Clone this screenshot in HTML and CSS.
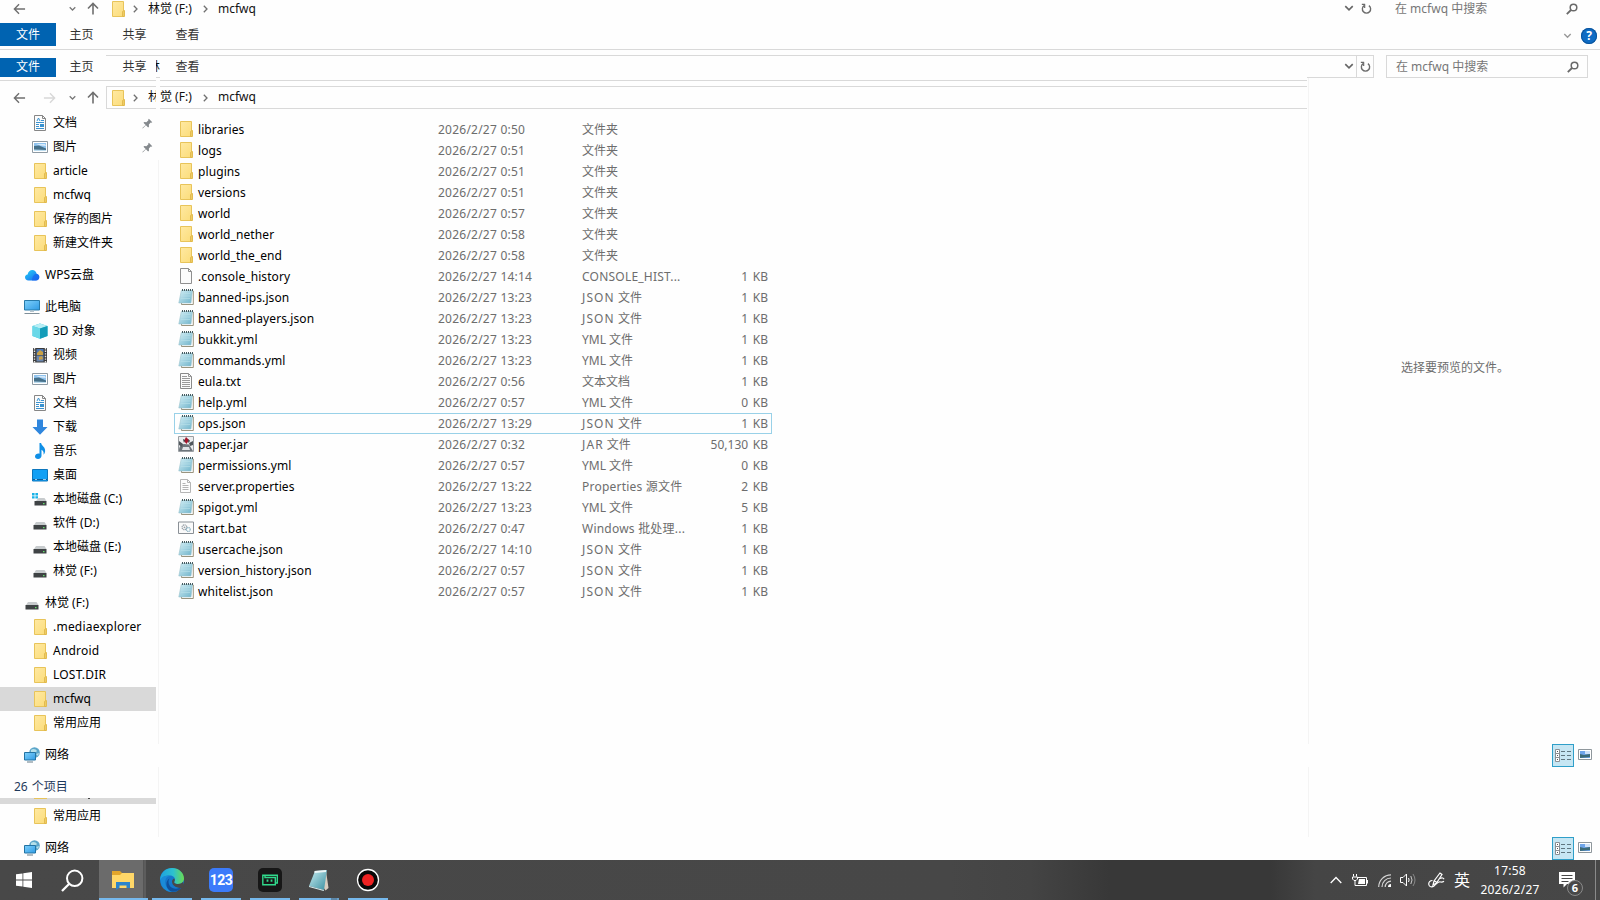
FILE: index.html
```html
<!DOCTYPE html>
<html lang="zh-CN">
<head>
    <meta charset="UTF-8">
    <meta name="viewport" content="width=device-width, initial-scale=1.0">
    <title>mcfwq</title>
    <link rel="stylesheet" href="styles.css">
</head>
<body>
    <!-- 图标 -->
    <svg width="0" height="0" class="sprite">
        <defs>
            <linearGradient id="gFolder" x1="0" y1="0" x2="1" y2="1"><stop offset="0" stop-color="#ffe9a2"/><stop offset="1" stop-color="#fbdc79"/></linearGradient>
            <linearGradient id="gPad" x1="0" y1="0" x2="1" y2="1"><stop offset="0" stop-color="#d3eef5"/><stop offset="1" stop-color="#6fb4cb"/></linearGradient>
            <linearGradient id="gCloud" x1="0" y1="0" x2="1" y2="1"><stop offset="0" stop-color="#26d3f5"/><stop offset="1" stop-color="#1762f0"/></linearGradient>
            <linearGradient id="gScreen" x1="0" y1="0" x2="1" y2="1"><stop offset="0" stop-color="#7fd0fb"/><stop offset="1" stop-color="#2f9be4"/></linearGradient>
            <linearGradient id="gEdge" x1="0" y1="0" x2="1" y2="0"><stop offset="0" stop-color="#1ea2e0"/><stop offset=".55" stop-color="#2dc1cf"/><stop offset="1" stop-color="#6bdc50"/></linearGradient>
            <linearGradient id="gNote" x1="0" y1="0" x2="1" y2="1"><stop offset="0" stop-color="#c9eef2"/><stop offset="1" stop-color="#3a8fa0"/></linearGradient>
        </defs>
        <symbol id="folder" viewBox="0 0 16 16"><path d="M2.500.5h11v9h1v6h-12z" fill="url(#gFolder)" stroke="#e8c45a"/><path d="M12.500 15.500v-5l1.500-1v6z" fill="#fbdc79" stroke="#dcb345" stroke-width=".8"/></symbol>
        <symbol id="note" viewBox="0 0 16 16"><path d="M4 2h11.300v13.500H3.500z" fill="#fff" stroke="#8f8870" stroke-width=".9"/><path d="M3.300 1.500h11.200L13 14H.8z" fill="url(#gPad)" stroke="#9cc4cf" stroke-width=".6"/><path d="M3.500 4.500h9M3 7h9.500M2.600 9.500h9.500" stroke="#b9e1ea" stroke-width=".6"/><path d="M4 1h11" stroke="#455b61" stroke-width="1.800" stroke-dasharray="1 1"/></symbol>
        <symbol id="blank" viewBox="0 0 16 16"><path d="M2.500.5h8l3 3v12h-11z" fill="#fbfbfb" stroke="#8f8f8f"/><path d="M10.500.5v3h3" fill="none" stroke="#8f8f8f"/></symbol>
        <symbol id="txt" viewBox="0 0 16 16"><path d="M2.500.5h8l3 3v12h-11z" fill="#fbfbfb" stroke="#8a8a8a"/><path d="M10.500.5v3h3M4 3.500h5M4 5.500h8M4 7.500h8M4 9.500h8M4 11.500h8M4 13.500h8" fill="none" stroke="#8f8f8f" stroke-width=".9"/></symbol>
        <symbol id="prop" viewBox="0 0 16 16"><path d="M2.500 1.500h7l3 3v10h-10z" fill="#fdfdfd" stroke="#b5b5b5"/><path d="M9.500 1.500v3h3M4.500 5.500h3M4.500 7.500h6M4.500 9.500h6M4.500 11.500h6" fill="none" stroke="#b5b5b5"/></symbol>
        <symbol id="jar" viewBox="0 0 16 16"><path d="M.5.5h15v15H.5z" fill="#eceeef" stroke="#9a9fa3"/><path d="M1 15c0-5 2-6.500 5-7l5 .5 4 6.500z" fill="#6d757b"/><path d="M1 5l4 3-1 3-3-2zM11 7l4-2v4l-3 1z" fill="#50575c"/><path d="M5 11h6l1 3H4z" fill="#dfe3e6"/><path d="M8 1l3 3-2.500 4L6 5z" fill="#a3152b"/><path d="M5 3l2 1-1 3zM10.500 3l1.500 2-2 2z" fill="#35393c"/></symbol>
        <symbol id="bat" viewBox="0 0 16 16"><path d="M.5 2h15v11.500H.5z" fill="#fafafa" stroke="#8a9096"/><circle cx="6.500" cy="7.300" r="2.400" fill="none" stroke="#9aa1a8" stroke-width="1.300" stroke-dasharray="1.200 .5"/><circle cx="6.500" cy="7.300" r=".9" fill="#9aa1a8"/><circle cx="10.300" cy="9.500" r="1.900" fill="#fff" stroke="#86aebf" stroke-width="1.200" stroke-dasharray="1 .4"/></symbol>
        <symbol id="doc" viewBox="0 0 16 16"><path d="M2.500.5h8l3 3v12h-11z" fill="#fcfcfc" stroke="#868686"/><path d="M10.500.5v3h3" fill="none" stroke="#868686"/><path d="M5 6l1.500-3L8 6M9 5.500h3M4 7.500h8M4 9.500h3M4 11.500h3M4 13.500h8" fill="none" stroke="#3a92cf"/><path d="M8 9h4v3H8z" fill="#3a92cf"/></symbol>
        <symbol id="pic" viewBox="0 0 16 16"><path d="M.5 2.500h15v11H.5z" fill="#fff" stroke="#8e9aa3"/><path d="M2 4h12v8H2z" fill="#8fc3ee"/><path d="M2 7l5-.5 7 3V12H2z" fill="#45708a"/><path d="M2 10.500l12 .5v1H2z" fill="#bcdcef"/><path d="M4 5h9l1 2-5-.5z" fill="#d7eafa"/></symbol>
        <symbol id="cloud" viewBox="0 0 16 16"><path d="M4.500 13.500C2.300 13.500 1 12 1 10.300c0-1.600 1-2.600 2.600-2.900C4.200 4.700 6 3 8.200 3c2.300 0 4 1.500 4.400 3.800 1.800.4 2.700 1.600 2.700 3.200 0 2-1.300 3.500-3.500 3.500z" fill="url(#gCloud)"/><path d="M8 13.500c0-4 2-6.500 4.600-6.700 1.800.4 2.700 1.600 2.700 3.200 0 2-1.300 3.500-3.500 3.500z" fill="#1767ee" opacity=".7"/></symbol>
        <symbol id="pc" viewBox="0 0 16 16"><path d="M.5 1.500h15v9.500H.5z" fill="url(#gScreen)" stroke="#287aa9"/><path d="M6 11.500h4v1.500H6z" fill="#b6c4cc"/><path d="M.5 14.500h15" stroke="#7f8f99" stroke-width="1"/></symbol>
        <symbol id="cube" viewBox="0 0 16 16"><path d="M8 .5l7.500 2.500v10L8 15.800.5 13V3z" fill="#39c4dc"/><path d="M8 .5L15.500 3 8 5.500.5 3z" fill="#b7eef5"/><path d="M.5 3L8 5.500v10.300L.5 13z" fill="#6ad8e8"/><path d="M8 5.500L15.500 3v10L8 15.800z" fill="#149cb8"/></symbol>
        <symbol id="video" viewBox="0 0 16 16"><path d="M1 1h14v14.500H1z" fill="#3c3c3c"/><path d="M2.500 1v14.500M13.500 1v14.500" stroke="#e8e8e8" stroke-width="1.400" stroke-dasharray="1.400 1.200"/><path d="M4.500 2h7v6h-7z" fill="#4b77b5"/><path d="M4.500 8.500h7v6h-7z" fill="#6b86ad"/><path d="M5 6l3-3 3 2v3H5zM7 10l3-1 1 3-4 1z" fill="#caa144"/></symbol>
        <symbol id="down" viewBox="0 0 16 16"><path d="M5 .5h6V8h4.500L8 15.800.5 8H5z" fill="#2f86dd"/></symbol>
        <symbol id="music" viewBox="0 0 16 16"><path d="M7.500 0h1.600c.3 3 4.700 4 4 8.500-.2 1.500-.8 2.500-1.600 3.200C12 9 11 7.500 9.500 6.800v6c0 1.800-1.500 3.200-3.500 3.200-1.800 0-3-1-3-2.500 0-1.800 1.700-3 3.500-3 .4 0 .7 0 1 .2z" fill="#0f8fe6"/></symbol>
        <symbol id="desk" viewBox="0 0 16 16"><path d="M.5 2.500h15v11.500H.5z" fill="#12a0f5" stroke="#0c76bd"/><path d="M1 12.500h14" stroke="#0a5f9c"/><path d="M3 12.500h2M11 12.500h3" stroke="#bfe6ff" stroke-width=".8"/></symbol>
        <symbol id="disk" viewBox="0 0 16 16"><path d="M4 7h8.500l2 3H2z" fill="#c7cbcd"/><path d="M1.500 10h13v4.500h-13z" fill="#3f4345"/><path d="M11 12h1.500v1.200H11z" fill="#62e06a"/></symbol>
        <symbol id="sysdisk" viewBox="0 0 16 16"><path d="M0 2h2.600v2.400H0zM3.400 2h2.600v2.400H3.400zM0 5.200h2.600v2.400H0zM3.400 5.200h2.600v2.400H3.400z" fill="#18b2e8"/><path d="M6.500 7h6l2 3H4z" fill="#c7cbcd"/><path d="M2.500 10h12v4.500h-12z" fill="#3f4345"/><path d="M11 12h1.500v1.200H11z" fill="#62e06a"/></symbol>
        <symbol id="net" viewBox="0 0 16 16"><circle cx="10.500" cy="5.500" r="5.300" fill="#5ba5c9"/><path d="M7 3c2-2 5-1 6 1l-2 2-4-1zM12 7l3-1-1 3z" fill="#b5dfe9"/><path d="M.5 5.500h11v7.500H.5z" fill="url(#gScreen)" stroke="#2373a3"/><path d="M3 15h6" stroke="#8899a3" stroke-width="1.300"/></symbol>
        <symbol id="pin" viewBox="0 0 12 12"><path d="M7.500.8l3.700 3.700-1 .6-.7-.1-2 2.200.1 2.300-.9.900L4.300 8 .8 11.500.4 11 4 7.600 1.600 5.200l1-.8 2.200.1 2.200-2-.2-.8z" fill="#84898d"/></symbol>
        <symbol id="left" viewBox="0 0 14 12"><path d="M13 6H1.500M6.500 1L1.500 6l5 5" fill="none" stroke="currentColor" stroke-width="1.500"/></symbol>
        <symbol id="up" viewBox="0 0 12 13"><path d="M6 12.500V1.500M1 6.500l5-5 5 5" fill="none" stroke="currentColor" stroke-width="1.600"/></symbol>
        <symbol id="caret" viewBox="0 0 8 6"><path d="M.8 1L4 4.200 7.200 1" fill="none" stroke="currentColor" stroke-width="1.400"/></symbol>
        <symbol id="chev" viewBox="0 0 5 8"><path d="M.8.8L4 4 .8 7.200" fill="none" stroke="currentColor" stroke-width="1.300"/></symbol>
        <symbol id="reload" viewBox="0 0 12 12"><path d="M3.400 2.300A4.500 4.500 0 1 0 8.600 2.300" fill="none" stroke="#6a6a6a" stroke-width="1.500"/><path d="M4.500 1H.9M4 .8v4" fill="none" stroke="#6a6a6a" stroke-width="1.300"/></symbol>
        <symbol id="find" viewBox="0 0 12 12"><circle cx="7.500" cy="4.500" r="3.300" fill="none" stroke="#6a6a6a" stroke-width="1.500"/><path d="M5 7L.8 11.200" stroke="#6a6a6a" stroke-width="1.800"/></symbol>
        <symbol id="details" viewBox="0 0 16 13"><path d="M.5.5h4v12h-4zM.5 4.500h4M.5 8.500h4" fill="#fff" stroke="#8b8f94"/><path d="M2 2.500h1M2 6.500h1M2 10.500h1" stroke="#555"/><path d="M6 2.500h4M12 2.500h4M6 6.500h4M12 6.500h4M6 10.500h4M12 10.500h4" stroke="#5f7680"/></symbol>
        <symbol id="thumb" viewBox="0 0 14 11"><path d="M.5.5h13v10H.5z" fill="#fff" stroke="#8f979c"/><path d="M2 2h10v7H2z" fill="#6fa5ea"/><path d="M7 2h5v3H7z" fill="#cfe2fa"/><path d="M2 5l4 1 6-1v3L2 9z" fill="#3d6b78"/></symbol>
    </svg>

    <div class="explorer">
        <div class="top">
            <div class="addr addr-top">
                <svg class="i-left"><use href="#left"/></svg>
                <svg class="i-left hidden"><use href="#left"/></svg>
                <svg class="i-caret"><use href="#caret"/></svg>
                <svg class="i-up"><use href="#up"/></svg>
                <div class="path">
                    <svg class="i16"><use href="#folder"/></svg>
                    <svg class="i-chev c1"><use href="#chev"/></svg>
                    <span class="drive">林觉 (F:)</span>
                    <svg class="i-chev c2"><use href="#chev"/></svg>
                    <span>mcfwq</span>
                </div>
                <div class="addr-end">
                    <svg class="i-drop"><use href="#caret"/></svg>
                    <svg class="i-reload"><use href="#reload"/></svg>
                    <div class="search"><span>在 mcfwq 中搜索</span><svg class="i-find"><use href="#find"/></svg></div>
                </div>
            </div>
            <div class="tabs">
                <span class="tab file">文件</span><span class="tab">主页</span><span class="tab">共享</span><span class="tab">查看</span>
                <div class="tabs-end">
                    <svg class="i-fold"><use href="#caret"/></svg>
                    <span class="help">?</span>
                </div>
            </div>
        </div>

        <div class="main">
            <div class="left">
                <div class="boxline"></div>
                <div class="tabs tabs2">
                    <span class="tab file">文件</span><span class="tab">主页</span><span class="tab">共享</span><span class="tab">查看</span>
                </div>
                <div class="addr addr2">
                    <svg class="i-left"><use href="#left"/></svg>
                    <svg class="i-left forward"><use href="#left"/></svg>
                    <svg class="i-caret"><use href="#caret"/></svg>
                    <svg class="i-up"><use href="#up"/></svg>
                    <div class="path">
                        <svg class="i16"><use href="#folder"/></svg>
                        <svg class="i-chev c1"><use href="#chev"/></svg>
                        <span class="drive">林觉 (F:)</span>
                        <svg class="i-chev c2"><use href="#chev"/></svg>
                        <span>mcfwq</span>
                    </div>
                </div>
                <!-- 分隔条上残留的一段地址栏 -->
                <div class="tear"><div class="tear-box"><span>林</span></div></div>

                <div class="body">
                    <div class="nav">
                        <div class="item sub"><svg class="i16"><use href="#doc"/></svg><span>文档</span><svg class="i-pin"><use href="#pin"/></svg></div>
                        <div class="item sub"><svg class="i16"><use href="#pic"/></svg><span>图片</span><svg class="i-pin"><use href="#pin"/></svg></div>
                        <div class="item sub"><svg class="i16"><use href="#folder"/></svg><span>article</span></div>
                        <div class="item sub"><svg class="i16"><use href="#folder"/></svg><span>mcfwq</span></div>
                        <div class="item sub"><svg class="i16"><use href="#folder"/></svg><span>保存的图片</span></div>
                        <div class="item sub"><svg class="i16"><use href="#folder"/></svg><span>新建文件夹</span></div>
                        <div class="item root"><svg class="i16"><use href="#cloud"/></svg><span>WPS云盘</span></div>
                        <div class="item root"><svg class="i16"><use href="#pc"/></svg><span>此电脑</span></div>
                        <div class="item sub"><svg class="i16"><use href="#cube"/></svg><span>3D 对象</span></div>
                        <div class="item sub"><svg class="i16"><use href="#video"/></svg><span>视频</span></div>
                        <div class="item sub"><svg class="i16"><use href="#pic"/></svg><span>图片</span></div>
                        <div class="item sub"><svg class="i16"><use href="#doc"/></svg><span>文档</span></div>
                        <div class="item sub"><svg class="i16"><use href="#down"/></svg><span>下载</span></div>
                        <div class="item sub"><svg class="i16"><use href="#music"/></svg><span>音乐</span></div>
                        <div class="item sub"><svg class="i16"><use href="#desk"/></svg><span>桌面</span></div>
                        <div class="item sub"><svg class="i16"><use href="#sysdisk"/></svg><span>本地磁盘 (C:)</span></div>
                        <div class="item sub"><svg class="i16"><use href="#disk"/></svg><span>软件 (D:)</span></div>
                        <div class="item sub"><svg class="i16"><use href="#disk"/></svg><span>本地磁盘 (E:)</span></div>
                        <div class="item sub"><svg class="i16"><use href="#disk"/></svg><span>林觉 (F:)</span></div>
                        <div class="item root"><svg class="i16"><use href="#disk"/></svg><span>林觉 (F:)</span></div>
                        <div class="item sub"><svg class="i16"><use href="#folder"/></svg><span class="wide">.mediaexplorer</span></div>
                        <div class="item sub"><svg class="i16"><use href="#folder"/></svg><span class="wide">Android</span></div>
                        <div class="item sub"><svg class="i16"><use href="#folder"/></svg><span class="wide">LOST.DIR</span></div>
                        <div class="item sub active"><svg class="i16"><use href="#folder"/></svg><span>mcfwq</span></div>
                        <div class="item sub"><svg class="i16"><use href="#folder"/></svg><span>常用应用</span></div>
                        <div class="item root"><svg class="i16"><use href="#net"/></svg><span>网络</span></div>
                        <div class="count">26 个项目</div>
                        <div class="sliver"><i class="sliver-folder"></i><i class="sliver-q"></i></div>
                        <div class="item sub"><svg class="i16"><use href="#folder"/></svg><span>常用应用</span></div>
                        <div class="item root"><svg class="i16"><use href="#net"/></svg><span>网络</span></div>
                    </div>
                    <div class="divider nav-divider"><i></i><i></i></div>

                    <div class="files">
                        <div class="row"><svg class="i16"><use href="#folder"/></svg><span class="name">libraries</span><span class="date">2026/2/27 0:50</span><span class="type">文件夹</span><span class="size"></span></div>
                        <div class="row"><svg class="i16"><use href="#folder"/></svg><span class="name">logs</span><span class="date">2026/2/27 0:51</span><span class="type">文件夹</span><span class="size"></span></div>
                        <div class="row"><svg class="i16"><use href="#folder"/></svg><span class="name">plugins</span><span class="date">2026/2/27 0:51</span><span class="type">文件夹</span><span class="size"></span></div>
                        <div class="row"><svg class="i16"><use href="#folder"/></svg><span class="name">versions</span><span class="date">2026/2/27 0:51</span><span class="type">文件夹</span><span class="size"></span></div>
                        <div class="row"><svg class="i16"><use href="#folder"/></svg><span class="name">world</span><span class="date">2026/2/27 0:57</span><span class="type">文件夹</span><span class="size"></span></div>
                        <div class="row"><svg class="i16"><use href="#folder"/></svg><span class="name">world_nether</span><span class="date">2026/2/27 0:58</span><span class="type">文件夹</span><span class="size"></span></div>
                        <div class="row"><svg class="i16"><use href="#folder"/></svg><span class="name">world_the_end</span><span class="date">2026/2/27 0:58</span><span class="type">文件夹</span><span class="size"></span></div>
                        <div class="row"><svg class="i16"><use href="#blank"/></svg><span class="name">.console_history</span><span class="date">2026/2/27 14:14</span><span class="type wide">CONSOLE_HIST...</span><span class="size">1 KB</span></div>
                        <div class="row"><svg class="i16"><use href="#note"/></svg><span class="name">banned-ips.json</span><span class="date">2026/2/27 13:23</span><span class="type"><b>JSON</b> 文件</span><span class="size">1 KB</span></div>
                        <div class="row"><svg class="i16"><use href="#note"/></svg><span class="name">banned-players.json</span><span class="date">2026/2/27 13:23</span><span class="type"><b>JSON</b> 文件</span><span class="size">1 KB</span></div>
                        <div class="row"><svg class="i16"><use href="#note"/></svg><span class="name">bukkit.yml</span><span class="date">2026/2/27 13:23</span><span class="type">YML 文件</span><span class="size">1 KB</span></div>
                        <div class="row"><svg class="i16"><use href="#note"/></svg><span class="name">commands.yml</span><span class="date">2026/2/27 13:23</span><span class="type">YML 文件</span><span class="size">1 KB</span></div>
                        <div class="row"><svg class="i16"><use href="#txt"/></svg><span class="name">eula.txt</span><span class="date">2026/2/27 0:56</span><span class="type">文本文档</span><span class="size">1 KB</span></div>
                        <div class="row"><svg class="i16"><use href="#note"/></svg><span class="name">help.yml</span><span class="date">2026/2/27 0:57</span><span class="type">YML 文件</span><span class="size">0 KB</span></div>
                        <div class="row focused"><svg class="i16"><use href="#note"/></svg><span class="name">ops.json</span><span class="date">2026/2/27 13:29</span><span class="type"><b>JSON</b> 文件</span><span class="size">1 KB</span></div>
                        <div class="row"><svg class="i16"><use href="#jar"/></svg><span class="name">paper.jar</span><span class="date">2026/2/27 0:32</span><span class="type"><b>JAR</b> 文件</span><span class="size">50,130 KB</span></div>
                        <div class="row"><svg class="i16"><use href="#note"/></svg><span class="name">permissions.yml</span><span class="date">2026/2/27 0:57</span><span class="type">YML 文件</span><span class="size">0 KB</span></div>
                        <div class="row"><svg class="i16"><use href="#prop"/></svg><span class="name">server.properties</span><span class="date">2026/2/27 13:22</span><span class="type wide">Properties 源文件</span><span class="size">2 KB</span></div>
                        <div class="row"><svg class="i16"><use href="#note"/></svg><span class="name">spigot.yml</span><span class="date">2026/2/27 13:23</span><span class="type">YML 文件</span><span class="size">5 KB</span></div>
                        <div class="row"><svg class="i16"><use href="#bat"/></svg><span class="name">start.bat</span><span class="date">2026/2/27 0:47</span><span class="type wide">Windows 批处理...</span><span class="size">1 KB</span></div>
                        <div class="row"><svg class="i16"><use href="#note"/></svg><span class="name">usercache.json</span><span class="date">2026/2/27 14:10</span><span class="type"><b>JSON</b> 文件</span><span class="size">1 KB</span></div>
                        <div class="row"><svg class="i16"><use href="#note"/></svg><span class="name">version_history.json</span><span class="date">2026/2/27 0:57</span><span class="type"><b>JSON</b> 文件</span><span class="size">1 KB</span></div>
                        <div class="row"><svg class="i16"><use href="#note"/></svg><span class="name">whitelist.json</span><span class="date">2026/2/27 0:57</span><span class="type"><b>JSON</b> 文件</span><span class="size">1 KB</span></div>
                    </div>
                </div>
            </div>

            <div class="right">
                <div class="addr-tail">
                    <div class="drop-box"><svg class="i-drop"><use href="#caret"/></svg></div>
                    <div class="reload-box"><svg class="i-reload"><use href="#reload"/></svg></div>
                    <div class="search boxed"><span>在 mcfwq 中搜索</span><svg class="i-find"><use href="#find"/></svg></div>
                </div>
                <div class="preview">
                    <div class="divider pre-divider"><i></i><i></i></div>
                    <div class="preview-body">
                        <div class="hint">选择要预览的文件。</div>
                        <div class="views">
                            <span class="view-on"><svg class="i-details"><use href="#details"/></svg></span><svg class="i-thumb"><use href="#thumb"/></svg>
                        </div>
                        <div class="views">
                            <span class="view-on"><svg class="i-details"><use href="#details"/></svg></span><svg class="i-thumb"><use href="#thumb"/></svg>
                        </div>
                    </div>
                </div>
            </div>
        </div>
    </div>

    <!-- 任务栏 -->
    <div class="taskbar">
        <div class="start"><svg width="16" height="16" viewBox="0 0 16 16"><path d="M0 2.300L6.500 1.400V7.600H0zM7.300 1.300L16 0v7.600H7.300zM0 8.400h6.500v6.200L0 13.700zM7.300 8.400H16V16l-8.700-1.300z" fill="#fff"/></svg></div>
        <div class="seek"><svg width="23" height="23" viewBox="0 0 23 23"><circle cx="13.700" cy="9.300" r="7.700" fill="none" stroke="#fff" stroke-width="2"/><path d="M8.300 14.800L1 22" stroke="#fff" stroke-width="2.300"/></svg></div>
        <div class="app current"><svg width="22" height="20" viewBox="0 0 22 20"><path d="M0 1h8l2 2h12v15H0z" fill="#e2a52b"/><path d="M0 5h8l2-2h12v15H0z" fill="#ffd768"/><path d="M4 18v-6h14v6h-3.500v-2.500h-7V18z" fill="#2c84cc"/><path d="M4.500 16L7 18l-3 2z" fill="#2c84cc"/></svg></div>
        <div class="app"><svg width="24" height="24" viewBox="0 0 24 24"><circle cx="12" cy="12" r="12" fill="#1577cc"/><path d="M.2 10C1.200 4 6 0 12 0c7 0 12 5 12 10.500 0 3.500-2.500 5.500-6 5.500-3 0-4.500-1.200-3.500-2.800 1.500-3-1-5.700-4.700-5.700C5.500 7.500 1.500 9 .2 13z" fill="url(#gEdge)"/><path d="M9.500 8C4 9 4 17 8 20.500c3 3 7 3.500 10 2-2 1.500-6 2-9 1C2 21 0 15.500 1 11c1.500-3 5-4 8.500-3z" fill="#1b8bd8"/><path d="M9.500 10.500c-2 2.500-1 7.500 3 9.500 3 1.500 7 .5 9.500-1.500-2 4-7 6-11 5-5-2-6.500-10-1.500-13z" fill="#10509c"/><path d="M14.500 13.200c-1 1.600.5 2.800 3.500 2.800 2 0 3.800-.7 5-2l1 6h-2.500c-3.500 0-9.500-1.500-9.500-6.500 0-1.500 1-2.500 2-3 .8.700 1 1.800.5 2.700z" fill="#484848"/></svg></div>
        <div class="app"><span class="app-123">123</span></div>
        <div class="app"><svg width="24" height="24" viewBox="0 0 24 24"><rect width="24" height="24" rx="5" fill="#171717"/><path d="M7 7.200h12.300V15h-2M4.800 7.200v9.600h12.500V9.500H7V7.200z" fill="none" stroke="#31d98c" stroke-width="1.400"/><path d="M9.500 11.500v2.200M13.500 11.500v2.200" stroke="#31d98c" stroke-width="1.800"/></svg></div>
        <div class="app split"><svg width="24" height="24" viewBox="0 0 24 24"><path d="M19 3l2.500 17-3 2.500-2-3z" fill="#d8cdbf"/><path d="M8 3l12-1-3 20-15-4z" fill="url(#gNote)"/><path d="M7.500 4L19 3" stroke="#edf6f7" stroke-width="2"/><path d="M2 18l15 4-.3 1L2 19z" fill="#d9eef0"/></svg></div>
        <div class="app"><svg width="24" height="24" viewBox="0 0 24 24"><circle cx="12" cy="12" r="10.500" fill="#090909" stroke="#fff" stroke-width="1.300"/><circle cx="12" cy="12" r="6" fill="#ee2222"/></svg></div>

        <div class="tray">
            <svg class="t-up" width="12" height="8" viewBox="0 0 12 8"><path d="M.7 7L6 1.500 11.300 7" fill="none" stroke="#fff" stroke-width="1.300"/></svg>
            <svg class="t-bat" width="16" height="13" viewBox="0 0 16 13"><path d="M5.500 3.500h9v8h-9M15.500 6v3.500" fill="none" stroke="#fff"/><path d="M7 5h6v5H6z" fill="#fff"/><path d="M1.500 0v2.500M4.500 0v2.500M.5 3h5v2L4 6.500H2L.5 5zM3 6.500v5h3" fill="none" stroke="#fff"/></svg>
            <svg class="t-wifi" width="14" height="14" viewBox="0 0 14 14"><path d="M.7 13A12.300 12.300 0 0 1 13 .8M4 13a9 9 0 0 1 9-9M7.200 13A5.800 5.800 0 0 1 13 7.200" fill="none" stroke="#d5d5d5" stroke-width="1.200"/><path d="M10 13a3 3 0 0 1 3-3v3z" fill="#fff"/></svg>
            <svg class="t-vol" width="17" height="14" viewBox="0 0 17 14"><path d="M.5 4.500H3L6.500 1v12L3 9.500H.5z" fill="none" stroke="#fff"/><path d="M8.500 5q1.200 2 0 4" fill="none" stroke="#fff"/><path d="M10.800 3q2.500 4 0 8" fill="none" stroke="#ccc"/><path d="M13 1q4 6 0 12" fill="none" stroke="#888"/></svg>
            <svg class="t-pen" width="17" height="16" viewBox="0 0 17 16"><path d="M5 13l1-4 6-8 2 1.500-5.500 8.500zM6.500 9L9 10.500" fill="none" stroke="#fff" stroke-width="1.200"/><path d="M4.500 8.500C2 8.500.5 10 .8 12.500S4 15.500 6 14s3-3.500 5-4 2.500 1 5-.8M12 6.500c2-1 3.500-.5 4 .8" fill="none" stroke="#fff" stroke-width="1.200"/></svg>
            <span class="ime">英</span>
            <div class="clock"><span>17:58</span><span>2026/2/27</span></div>
            <div class="notice">
                <svg width="16" height="16" viewBox="0 0 16 16"><path d="M0 0h16v12H8l-3.500 3.500V12H0z" fill="#fff"/><path d="M2.500 3.500h11M2.500 6.500h11M2.500 9.500h7" stroke="#484848"/></svg>
                <span class="badge">6</span>
            </div>
            <i class="show-desktop"></i>
        </div>
    </div>
</body>
</html>
```
FILE: styles.css
```css
/* --- 基本样式 --- */
* {
    box-sizing: border-box;
}

body {
    margin: 0;
    width: 1600px;
    height: 900px;
    overflow: hidden;
    background: #fefefe;
    color: #111;
    font-family: "Noto Sans", "Noto Sans CJK SC", sans-serif;
    font-size: 12px;
    line-height: 16px;
    display: flex;
    flex-direction: column;
}

svg {
    display: block;
    flex: none;
}

.sprite {
    position: absolute;
}

.i16 { width: 16px; height: 16px; }
.i-left { width: 13px; height: 12px; color: #6f6f6f; }
.i-caret { width: 7px; height: 6px; color: #777; }
.i-up { width: 12px; height: 13px; color: #6f6f6f; }
.i-chev { width: 5px; height: 8px; color: #6f6f6f; }
.i-drop { width: 10px; height: 7px; color: #666; }
.i-reload { width: 11px; height: 12px; }
.i-find { width: 12px; height: 12px; }
.i-fold { width: 9px; height: 6px; color: #999; }
.i-pin { width: 11px; height: 11px; }
.i-details { width: 16px; height: 13px; }
.i-thumb { width: 14px; height: 11px; }

.explorer {
    height: 860px;
    overflow: hidden;
    display: flex;
    flex-direction: column;
}

/* --- 顶部 --- */
.top {
    height: 50px;
    flex: none;
    border-bottom: 1px solid #d9d9d9;
}

.addr {
    display: flex;
    align-items: center;
    padding-left: 13px;
}

.addr-top {
    height: 17px;
    margin-bottom: 6px;
}

.addr .i-left + .i-left {
    margin-left: 17px;
}

.forward {
    color: #d8d8d8;
    transform: scaleX(-1);
}

.hidden {
    visibility: hidden;
}

.addr .i-caret {
    margin-left: 13px;
}

.addr .i-up {
    margin-left: 11px;
}

.path {
    flex: 1;
    height: 23px;
    margin-left: 7px;
    padding-left: 3px;
    border: 1px solid transparent;
    display: flex;
    align-items: center;
}

.c1 {
    margin-left: 7px;
    margin-right: 10px;
}

.drive {
    width: 45px;
    white-space: nowrap;
}

.c2 {
    margin: 0 10px 0 10px;
}

.addr-end {
    width: 256px;
    display: flex;
    align-items: center;
}

.addr-end .i-reload {
    margin-left: 7px;
}

.search {
    width: 202px;
    height: 23px;
    margin-left: 13px;
    padding: 0 8px 0 9px;
    border: 1px solid transparent;
    color: #777;
    display: flex;
    align-items: center;
    justify-content: space-between;
}

.tabs {
    display: flex;
    height: 23px;
}

.tab {
    width: 53px;
    line-height: 24px;
    padding-right: 2px;
    text-align: center;
    color: #333;
}

.tab.file {
    width: 56px;
    padding-right: 0;
    line-height: 23px;
    background: #0063b1;
    color: #fff;
}

.tabs-end {
    margin-left: auto;
    width: 37px;
    display: flex;
    align-items: center;
    padding-top: 3px;
}

.help {
    width: 16px;
    height: 16px;
    margin-left: 9px;
    border-radius: 50%;
    background: #0f6cc4;
    box-shadow: inset 0 0 0 1px #0a549c;
    color: #fff;
    font-weight: bold;
    text-align: center;
}

/* --- 主区域 --- */
.main {
    display: flex;
    height: 810px;
}

.left {
    width: 1307px;
    position: relative;
}

.boxline {
    margin: 5px 0 2px 106px;
    height: 1px;
    background: #d9d9d9;
}

.tabs2 {
    border-bottom: 1px solid #d9d9d9;
}

.tabs2 .tab {
    height: 19px;
    line-height: 17px;
}

.addr2 {
    height: 30px;
    padding-top: 3px;
}

.addr2 .path {
    border: 1px solid #d9d9d9;
    border-right: 0;
}

.addr2 .path span {
    padding-bottom: 1px;
}

.tear {
    position: absolute;
    left: 156px;
    top: 4px;
    width: 4px;
    height: 58px;
    overflow: hidden;
    background: #fefefe;
}

.tear-box {
    margin-top: 1px;
    height: 23px;
    border-top: 1px solid #d9d9d9;
    border-bottom: 1px solid #d9d9d9;
    display: flex;
    align-items: center;
}

.tear-box span {
    margin-left: -8px;
    flex: none;
}

.body {
    display: flex;
    height: 749px;
}

/* --- 导航窗格 --- */
.nav {
    width: 156px;
    flex: none;
}

.item {
    height: 24px;
    display: flex;
    align-items: center;
    padding-left: 32px;
    color: #000;
    white-space: nowrap;
}

.item span {
    margin-left: 5px;
    padding-bottom: 1px;
}

.item.root {
    margin-top: 8px;
    padding-left: 24px;
}

.item.active {
    background: #d9d9d9;
}

.item .i-pin {
    margin-left: auto;
    margin-right: 3px;
}

.wide {
    letter-spacing: .22px;
}

.count {
    height: 31px;
    padding: 12px 0 0 14px;
    color: #1e395b;
    word-spacing: 1px;
}

.sliver {
    height: 6px;
    background: #d9d9d9;
    display: flex;
}

.sliver-folder {
    width: 13px;
    height: 1px;
    margin-left: 34px;
    background: #e8c45a;
}

.sliver-q {
    width: 2px;
    height: 1px;
    margin-left: 41px;
    background: #444;
}

.divider {
    width: 1px;
    flex: none;
    display: flex;
    flex-direction: column;
    gap: 23px;
}

.divider i {
    background: #f4f4f4;
}

.nav-divider {
    margin: 49px 0 0 2px;
}

.nav-divider i:first-child { height: 584px; }
.nav-divider i:last-child { height: 70px; }

/* --- 文件列表 --- */
.files {
    margin: 8px 0 0 15px;
    width: 598px;
}

.row {
    height: 21px;
    padding: 0 4px 0 4px;
    display: flex;
    align-items: center;
    color: #6d6d6d;
    white-space: nowrap;
}

.row .i16 {
    margin-top: -1px;
}

.row.focused {
    box-shadow: inset 0 0 0 1px #99d1e8;
}

.name {
    width: 240px;
    margin-left: 4px;
    color: #000;
    letter-spacing: .09px;
}

.date {
    width: 144px;
    letter-spacing: .23px;
}

.type {
    width: 110px;
}

.type b {
    font-weight: normal;
    letter-spacing: 1.1px;
}

.size {
    flex: 1;
    text-align: right;
    word-spacing: 1.500px;
}

/* --- 预览窗格 --- */
.right {
    width: 293px;
    padding-top: 5px;
}

.addr-tail {
    display: flex;
    height: 23px;
}

.drop-box,
.reload-box {
    border: 1px solid #d9d9d9;
    border-left: 0;
    display: flex;
    align-items: center;
}

.drop-box {
    width: 50px;
    padding-left: 37px;
}

.reload-box {
    width: 17px;
    padding-left: 3px;
}

.search.boxed {
    margin-left: 12px;
    border-color: #d9d9d9;
}

.preview {
    height: 782px;
    display: flex;
}

.pre-divider {
    margin-left: 1px;
}

.pre-divider i:first-child { height: 666px; }
.pre-divider i:last-child { height: 70px; }

.preview-body {
    flex: 1;
    display: flex;
    flex-direction: column;
}

.hint {
    flex: none;
    height: 666px;
    padding-top: 282px;
    padding-left: 92px;
    color: #6d6d6d;
}

.views {
    flex: none;
    height: 23px;
    margin-bottom: 70px;
    padding-right: 8px;
    display: flex;
    justify-content: flex-end;
    gap: 4px;
}

.view-on {
    width: 22px;
    height: 23px;
    border: 1px solid #2f9fc9;
    background: #c6e6f3;
    display: flex;
    align-items: center;
    justify-content: center;
}

.i-thumb {
    margin-top: 5px;
}

/* --- 任务栏 --- */
.taskbar {
    height: 40px;
    background: linear-gradient(90deg, #484848 0, #474747 950px, #444 1030px, #383838 1110px, #383838 1270px, #454545 1315px, #474747 100%);
    display: flex;
    color: #fff;
}

.start,
.seek,
.app {
    display: flex;
    align-items: center;
    justify-content: center;
}

.start {
    width: 48px;
}

.seek {
    width: 48px;
}

.app {
    width: 40px;
    margin-left: 9px;
    padding-top: 2px;
    border-bottom: 2px solid #76b9ed;
}

.app.current {
    width: 49px;
    margin-left: 3px;
    padding-right: 2px;
    background: linear-gradient(90deg, #6b6b6b 44px, #555 44px, #555 45px, #5c5c5c 45px, #5c5c5c 47px, #484848 47px);
    margin-right: -5px;
}

.app.split {
    border-image: linear-gradient(90deg, #76b9ed 31px, #5c87a8 31px, #5c87a8 36px, #699fc9 36px) 2;
}

.app-123 {
    width: 24px;
    height: 24px;
    border-radius: 5px;
    background: #3c7bfa;
    font: bold 14px/24px Roboto, sans-serif;
    letter-spacing: -.6px;
    text-align: center;
}

.tray {
    margin-left: auto;
    width: 270px;
    display: flex;
    align-items: center;
}

.t-bat { margin-left: 10px; }
.t-wifi { margin-left: 10px; margin-top: 2px; }
.t-vol { margin-left: 8px; }
.t-pen { margin-left: 11px; }

.ime {
    margin-left: 9px;
    font-size: 16px;
    line-height: 20px;
}

.clock {
    width: 60px;
    margin-left: 10px;
    display: flex;
    flex-direction: column;
    align-items: center;
    line-height: 19px;
    letter-spacing: .25px;
}

.notice {
    position: relative;
    margin-left: 19px;
}

.badge {
    position: absolute;
    left: 8px;
    top: 8px;
    width: 16px;
    height: 16px;
    border: 1px solid #8a8a8a;
    border-radius: 50%;
    background: #484848;
    font-size: 11px;
    font-weight: bold;
    line-height: 14px;
    text-align: center;
}

.show-desktop {
    margin-left: auto;
    margin-right: 4px;
    width: 1px;
    height: 40px;
    background: #8a8a8a;
}
```
